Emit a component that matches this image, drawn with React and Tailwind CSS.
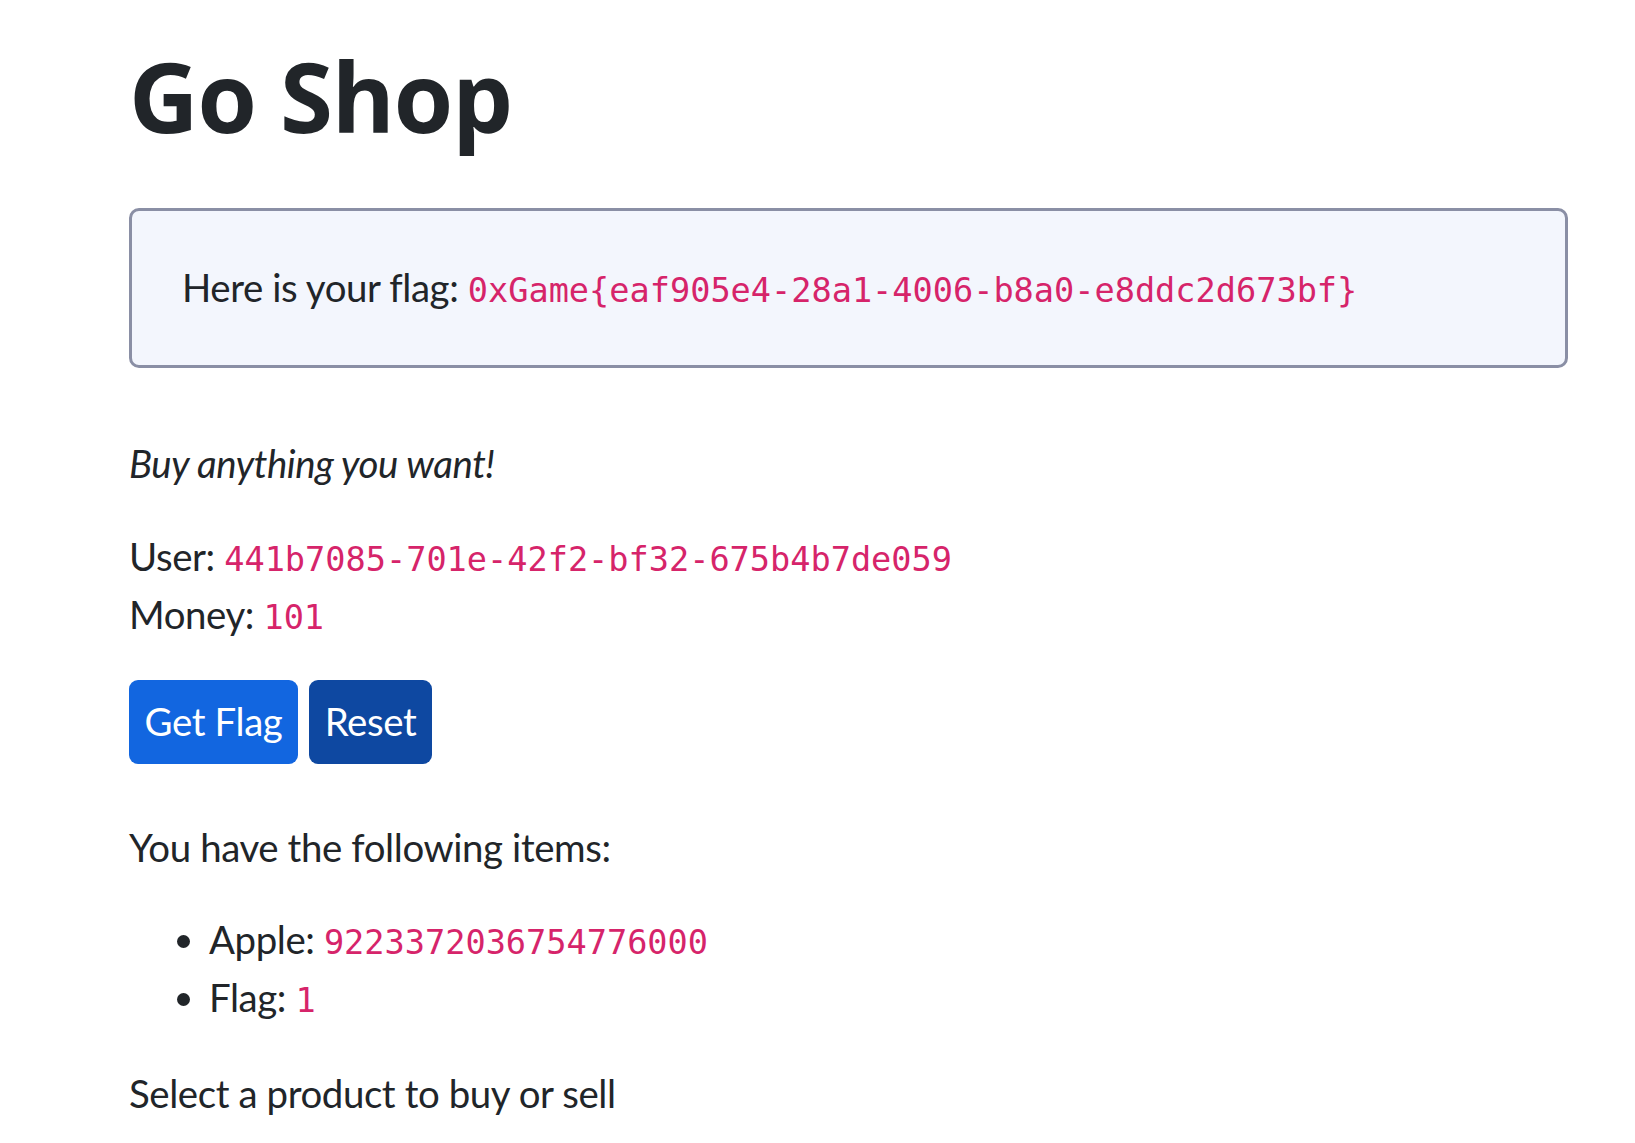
import React from "react";

// --- Small pieces ---
const Code = ({ children }) => (
  <code className="font-['DejaVu_Sans_Mono','Liberation_Mono',monospace] text-[33.6px] leading-none tracking-normal text-[#d6246a]">
    {children}
  </code>
);

export default function App() {
  return (
    <div className="min-h-screen bg-white text-[#212529] font-['Lato','Open_Sans',sans-serif] text-[38.4px] leading-[1.5] tracking-[-0.4px]">
      <div className="ml-[129px] w-[1439px] pt-[38px]">
        {/* Title */}
        <h1 className="font-['Open_Sans',sans-serif] text-[96px] leading-[1.2] font-bold tracking-[-1px]">Go Shop</h1>

        {/* Flag alert */}
        <div className="mt-[55px] rounded-[10px] border-[3px] border-[#8a8fa5] bg-[#f3f6fd] p-[48px] pl-[50px]">
          Here is your flag: <Code>0xGame{"{"}eaf905e4-28a1-4006-b8a0-e8ddc2d673bf{"}"}</Code>
        </div>

        <p className="mt-[67px] italic">Buy anything you want!</p>

        <div className="mt-[36px]">
          <div>
            User: <Code>441b7085-701e-42f2-bf32-675b4b7de059</Code>
          </div>
          <div>
            Money: <Code>101</Code>
          </div>
        </div>

        {/* Actions */}
        <div className="mt-[36px] flex gap-[11px]">
          <button className="h-[84px] w-[169px] rounded-[9px] bg-[#1266e0] text-white">Get Flag</button>
          <button className="h-[84px] w-[123px] rounded-[9px] bg-[#0e48a1] text-white">Reset</button>
        </div>

        <p className="mt-[55px]">You have the following items:</p>

        <ul className="mt-[35px] list-disc pl-[80px]">
          <li>
            Apple: <Code>9223372036754776000</Code>
          </li>
          <li>
            Flag: <Code>1</Code>
          </li>
        </ul>

        <p className="mt-[39px]">Select a product to buy or sell</p>
      </div>
    </div>
  );
}
